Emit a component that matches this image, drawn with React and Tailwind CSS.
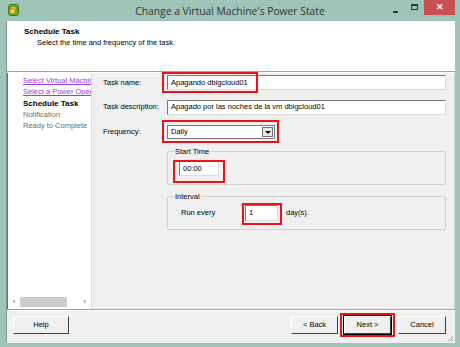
const font = { fontFamily: '"Liberation Sans", Arial, sans-serif' };

const RedBox = ({ className }) => (
    <div className={`absolute border-2 border-[#e8141b] pointer-events-none ${className}`} />
);

const Field = ({ value, className = "" }) => (
    <div className={`h-[15px] bg-white border border-t-[#7a7a7a] border-l-[#7a7a7a] border-r-[#dcdcdc] border-b-[#dcdcdc] pl-[3px] flex items-center text-[7.5px] text-black whitespace-nowrap ${className}`}>
        {value}
    </div>
);

const WinButton = ({ label, isDefault, className = "" }) => (
    <div className={`h-[18px] flex items-center justify-center text-[7.5px] text-black bg-[#f0f0f0] border border-t-white border-l-white border-r-[#404040] border-b-[#404040] ${isDefault ? "outline outline-1 outline-black" : ""} ${className}`}>
        {label}
    </div>
);

const GroupBox = ({ title, children, className = "" }) => (
    <fieldset className={`border border-[#d0d0d0] rounded-[2px] ${className}`}>
        <legend className="ml-[6px] px-[1px] text-[7.5px] leading-[9px] text-black">{title}</legend>
        {children}
    </fieldset>
);

export default function App() {
    return (
        <div className="w-[460px] h-[347px] bg-[#9ec5b8] flex flex-col overflow-hidden" style={font}>
            {/* title bar */}
            <div className="h-[21px] relative flex items-center justify-center shrink-0">
                <svg className="absolute left-[8px] top-[4px]" width="11" height="12" viewBox="0 0 11 12">
                    <rect x="0.5" y="0.5" width="10" height="11" rx="2.5" fill="#6faa2e" stroke="#3f7a1a" />
                    <rect x="3" y="2.5" width="5" height="5" rx="1" fill="#f2c522" stroke="#8a6a10" strokeWidth="0.6" />
                    <rect x="2" y="5" width="5" height="4.5" rx="1" fill="#f7d74a" stroke="#8a6a10" strokeWidth="0.6" />
                </svg>
                <span className="text-[10.3px] text-[#333] mt-[2px]" style={{ fontFamily: '"Open Sans", "Liberation Sans", sans-serif' }}>
                    Change a Virtual Machine's Power State
                </span>
                <div className="absolute left-[393px] top-[11px] w-[5px] h-[2px] bg-[#333]" />
                <div className="absolute left-[411px] top-[4px] w-[7px] h-[6px] border border-[#333] border-t-2" />
                <div className="absolute left-[424px] top-0 w-[31px] h-[15px] bg-[#c75050] flex items-center justify-center text-white text-[9px] font-bold">
                    ✕
                </div>
            </div>

            {/* window body */}
            <div className="flex-1 ml-[6px] mr-[5px] mb-[4px] flex flex-col border-l border-[#7f9a91] text-black">
                {/* header */}
                <div className="h-[50px] bg-white pl-[17px] pt-[6px] shrink-0">
                    <div className="text-[8px] font-bold leading-[10px]">Schedule Task</div>
                    <div className="text-[7.5px] leading-[10px] pl-[13px] mt-[1px]">Select the time and frequency of the task.</div>
                </div>
                <div className="h-[2px] border-t border-[#a0a0a0] bg-white shrink-0" />

                {/* middle */}
                <div className="h-[236px] flex shrink-0">
                    {/* nav */}
                    <div className="w-[85px] bg-white border-l border-[#6d6d6d] border-r border-r-[#dadada] flex flex-col overflow-hidden">
                        <div className="pl-[15px] pt-[2px] text-[7.5px] leading-[11.3px] whitespace-nowrap flex-1">
                            <div className="text-[#9a3de0] underline">Select Virtual Machin</div>
                            <div className="text-[#9a3de0] underline">Select a Power Oper</div>
                            <div className="font-bold text-[8px]">Schedule Task</div>
                            <div className="text-[#6d6d6d]">Notification</div>
                            <div className="text-[#6d6d6d]">Ready to Complete</div>
                        </div>
                        <div className="h-[12px] mb-[1px] flex items-center text-[8px] text-[#555]">
                            <span className="w-[12px] text-center">‹</span>
                            <div className="w-[47px] h-[10px] bg-[#cdcdcd]" />
                            <span className="flex-1 text-right pr-[5px]">›</span>
                        </div>
                    </div>

                    {/* form */}
                    <div className="flex-1 bg-[#f0f0f0] pl-[11px] pr-[8px] pt-[2px] text-[7.5px] border-r border-[#d8d8d8]">
                        <div className="flex items-center h-[15px] relative">
                            <span className="w-[64px]">Task name:</span>
                            <Field value="Apagando dbigcloud01" className="flex-1" />
                            <RedBox className="left-[59px] top-[-3px] w-[96px] h-[21px]" />
                        </div>
                        <div className="flex items-center h-[14px] mt-[10px]">
                            <span className="w-[64px] whitespace-nowrap">Task description:</span>
                            <Field value="Apagado por las noches de la vm dbigcloud01" className="flex-1 h-[14px]" />
                        </div>
                        <div className="flex items-center h-[14px] mt-[11px] relative">
                            <span className="w-[64px]">Frequency:</span>
                            <div className="w-[108px] h-[14px] bg-white border border-[#7a7a7a] flex items-center pl-[3px]">
                                <span className="flex-1">Daily</span>
                                <div className="w-[11px] h-[10px] mr-[1px] bg-[#e6e6e6] border border-[#707070] flex items-center justify-center">
                                    <div className="w-0 h-0 border-l-[3px] border-r-[3px] border-t-[3px] border-l-transparent border-r-transparent border-t-black" />
                                </div>
                            </div>
                            <RedBox className="left-[59px] top-[-5px] w-[117px] h-[23px]" />
                        </div>

                        <GroupBox title="Start Time" className="ml-[64px] mt-[8px] h-[38px] relative">
                            <Field value="00:00" className="w-[40px] ml-[11px] mt-[5px]" />
                            <RedBox className="left-[5px] top-[4px] w-[52px] h-[23px]" />
                        </GroupBox>

                        <GroupBox title="Interval" className="ml-[64px] mt-[7px] h-[38px] relative">
                            <div className="flex items-center mt-[4px]">
                                <span className="ml-[13px] w-[64px]">Run every</span>
                                <Field value="1" className="w-[33px] h-[16px]" />
                                <span className="ml-[8px]">day(s).</span>
                            </div>
                            <RedBox className="left-[74px] top-[2px] w-[40px] h-[22px]" />
                        </GroupBox>
                    </div>
                </div>

                <div className="h-[2px] border-t border-[#a0a0a0] bg-white shrink-0" />

                {/* button bar */}
                <div className="flex-1 bg-[#f0f0f0] flex items-start pt-[5px] pl-[6px] pr-[9px] relative">
                    <WinButton label="Help" className="w-[56px]" />
                    <div className="flex-1" />
                    <WinButton label="< Back" className="w-[47px]" />
                    <div className="relative ml-[6px]">
                        <WinButton label="Next >" isDefault className="w-[47px]" />
                        <RedBox className="left-[-4px] top-[-3px] w-[55px] h-[24px]" />
                    </div>
                    <WinButton label="Cancel" className="w-[48px] ml-[7px]" />
                    <svg className="absolute right-[1px] bottom-[1px]" width="7" height="7" viewBox="0 0 7 7">
                        <path d="M6 1 L1 6 M6 3 L3 6 M6 5 L5 6" stroke="#9a9a9a" strokeWidth="0.8" />
                    </svg>
                </div>
            </div>
        </div>
    );
}
